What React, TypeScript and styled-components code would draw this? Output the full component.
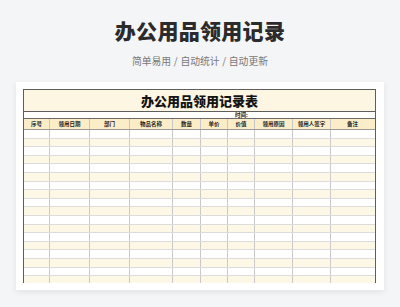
import React from "react";
import styled, { createGlobalStyle } from "styled-components";

const GlobalStyle = createGlobalStyle`
  html, body {
    margin: 0;
    padding: 0;
    background: #f4f5f7;
    font-family: "Noto Sans CJK SC", "Noto Sans", sans-serif;
  }
`;

const Page = styled.div`
  width: 400px;
  height: 307px;
  overflow: hidden;
  display: flex;
  flex-direction: column;
  align-items: center;
`;

const Heading = styled.h1`
  margin: 16px 0 0;
  font-size: 21px;
  line-height: 28px;
  font-weight: 900;
  color: #2b2b2b;
  letter-spacing: 0.3px;
`;

const Subtitle = styled.div`
  margin-top: 10px;
  font-size: 9.8px;
  line-height: 14px;
  color: #777;
  word-spacing: 0.5px;
`;

const Card = styled.div`
  margin-top: 14px;
  width: 368px;
  height: 208px;
  box-sizing: border-box;
  padding: 7px 8px 0 7px;
  background: #fff;
  box-shadow: 0 2px 6px rgba(0, 0, 0, 0.08);
  overflow: hidden;
`;

const Sheet = styled.div`
  width: 353px;
  height: 194px;
  overflow: hidden;
  border: 1.5px solid #5e5e5e;
  border-bottom: none;
  box-sizing: border-box;
`;

const TitleRow = styled.div`
  height: 21px;
  background: #fdf6e2;
  border-bottom: 1.5px solid #5e5e5e;
  display: flex;
  align-items: center;
  justify-content: center;
  font-size: 13px;
  font-weight: 900;
  color: #141414;
`;

const TimeRow = styled.div`
  height: 7px;
  box-sizing: border-box;
  border-bottom: 1px solid #6a6a6a;
  background: #fff;
  font-size: 5.5px;
  line-height: 6px;
  font-weight: 700;
  color: #222;
  padding-left: 211px;
`;

const columns = [26, 40, 40, 43, 28, 27, 27, 38, 38, 43];
const headers = ["序号", "领用日期", "部门", "物品名称", "数量", "单价", "价值", "领用原因", "领用人签字", "备注"];

const Row = styled.div<{ $bg: string; $h: number }>`
  display: flex;
  height: ${(p) => p.$h}px;
  box-sizing: border-box;
  background: ${(p) => p.$bg};
  border-bottom: 1px solid #dcdcdc;
`;

const Cell = styled.div<{ $w: number; $last?: boolean }>`
  width: ${(p) => p.$w}px;
  flex-shrink: 0;
  box-sizing: border-box;
  border-right: ${(p) => (p.$last ? "none" : "1px solid #c9c9c9")};
  display: flex;
  align-items: center;
  justify-content: center;
`;

const HeadText = styled.span`
  font-size: 5.5px;
  font-weight: 700;
  color: #222;
  white-space: nowrap;
`;

const HeaderRow = styled(Row)`
  border-bottom: 1px solid #9a9a9a;
`;

export default function App() {
  const rows = Array.from({ length: 19 }, (_, i) => i);
  return (
    <>
      <GlobalStyle />
      <Page>
        <Heading>办公用品领用记录</Heading>
        <Subtitle>简单易用 / 自动统计 / 自动更新</Subtitle>
        <Card>
          <Sheet>
            <TitleRow>办公用品领用记录表</TitleRow>
            <TimeRow>时间:</TimeRow>
            <HeaderRow $bg="#fcedc9" $h={11}>
              {headers.map((h, i) => (
                <Cell key={h} $w={columns[i]} $last={i === columns.length - 1}>
                  <HeadText>{h}</HeadText>
                </Cell>
              ))}
            </HeaderRow>
            {rows.map((r) => (
              <Row key={r} $bg={r % 2 === 0 ? "#ffffff" : "#fdf8e6"} $h={8.6}>
                {columns.map((w, i) => (
                  <Cell key={i} $w={w} $last={i === columns.length - 1} />
                ))}
              </Row>
            ))}
          </Sheet>
        </Card>
      </Page>
    </>
  );
}
